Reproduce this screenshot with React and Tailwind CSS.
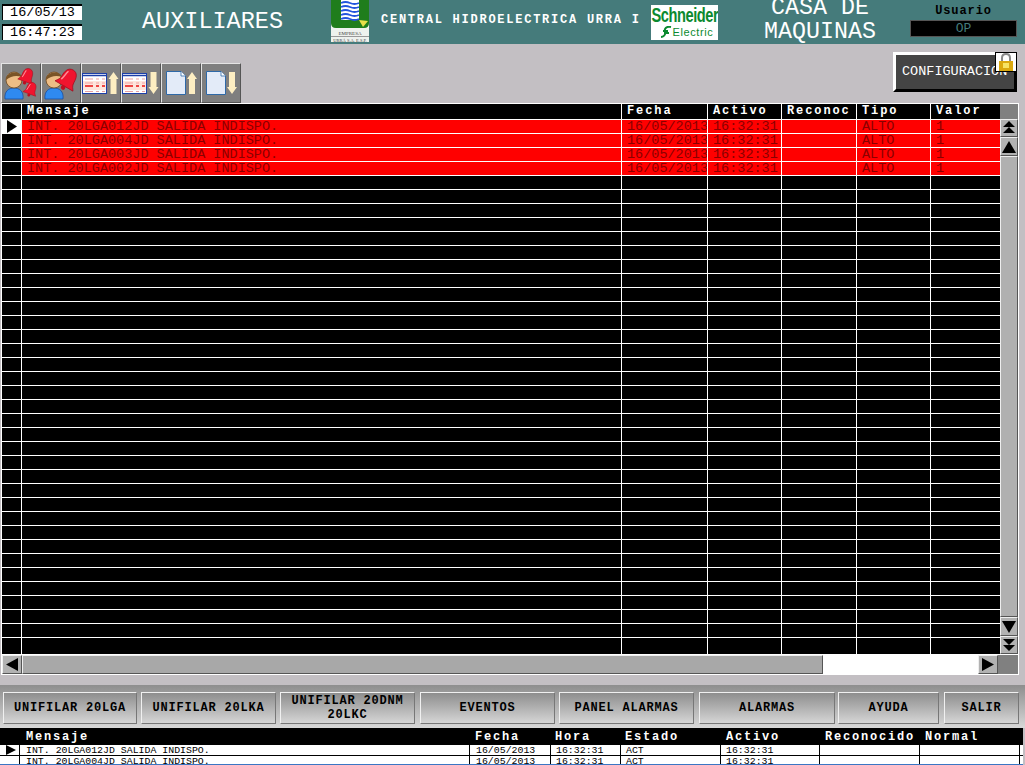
const mono = "font-['Liberation_Mono',monospace]";

const cols = [
  ["Mensaje", "w-[600px]"],
  ["Fecha", "w-[86px]"],
  ["Activo", "w-[74px]"],
  ["Reconoc", "w-[75px]"],
  ["Tipo", "w-[74px]"],
  ["Valor", "w-[69px]"],
];
const alarms = ["012", "004", "003", "002"];
const blank = Array.from({ length: 33 }, (_, i) => i);

function Person({ x = 0 }) {
  return (
    <g transform={`translate(${x} 0)`}>
      <path d="M4 35 C3 27 8 24 13 24 C18 24 23 27 22 35 Z" fill="#2f8af0" stroke="#1a4fa0" strokeWidth="0.8" />
      <circle cx="13" cy="16" r="8" fill="#edbd85" stroke="#6e4a22" strokeWidth="0.8" />
      <path d="M5 16 C5 7 19 6 21 13 C15 11 10 12 5 16 Z" fill="#7a5427" />
    </g>
  );
}
function Bell({ x, y, s = 1, r = 20 }) {
  return (
    <g transform={`translate(${x} ${y}) rotate(${r}) scale(${s})`}>
      <path d="M0 -9 C-5 -9 -6 -4 -6 0 C-6 4 -8 5 -9 7 L9 7 C8 5 6 4 6 0 C6 -4 5 -9 0 -9 Z" fill="#f0142e" stroke="#a00c1c" strokeWidth="0.6" />
      <path d="M-3 -6 C-4 -3 -4 0 -5 3" stroke="#ff8d96" strokeWidth="1.2" fill="none" />
      <circle cx="0" cy="8.500" r="2" fill="#c00d20" />
    </g>
  );
}
function Arrow({ up }) {
  return (
    <path
      d={up
        ? "M31.500 8 L36.500 15 L34.500 15 L34.500 30 L28.500 30 L28.500 15 L26.500 15 Z"
        : "M31.500 30 L36.500 23 L34.500 23 L34.500 8 L28.500 8 L28.500 23 L26.500 23 Z"}
      fill="#fdeec2"
    />
  );
}
function Table({ up }) {
  return (
    <svg width="38" height="38" viewBox="0 0 38 38">
      <rect x="0.500" y="9.500" width="24" height="20" fill="#fff" stroke="#1c3fa8" strokeWidth="1" />
      <path d="M1 11.500 H24" stroke="#1c3fa8" strokeWidth="1.500" />
      <path d="M3 15h8M14 15h3M20 15h3" stroke="#e8a0a0" strokeWidth="1" />
      <rect x="1" y="17" width="23" height="9" fill="#fde5dc" />
      <path d="M3 19h8M14 19h3M20 19h3" stroke="#f3a0a0" strokeWidth="1" />
      <path d="M3 22h8M14 22h3M20 22h3" stroke="#e81010" strokeWidth="1.500" />
      <path d="M3 27.500h8M14 27.500h3M20 27.500h3" stroke="#e8a0a0" strokeWidth="1" />
      <Arrow up={up} />
    </svg>
  );
}
function Page({ up }) {
  return (
    <svg width="38" height="38" viewBox="0 0 38 38">
      <path d="M4.500 7.500 H19 L23.500 12 V30.500 H4.500 Z" fill="#e3ebf8" stroke="#2e69a8" strokeWidth="1" />
      <path d="M19 7.500 V12 H23.500" fill="#fff" stroke="#2e69a8" strokeWidth="0.8" />
      <g transform="translate(-1.500 0)"><Arrow up={up} /></g>
    </svg>
  );
}

function ToolBtn({ children }) {
  return (
    <div className="w-10 h-10 bg-[#7f7f7f] border border-[#e4e4e4] border-b-[#555] border-r-[#555] flex items-center justify-center">
      {children}
    </div>
  );
}

function ScrollBtn({ d, className = "" }) {
  return (
    <div className={`bg-[#b2b2b2] border border-t-[#eee] border-l-[#eee] border-b-[#555] border-r-[#555] flex items-center justify-center ${className}`}>
      <svg width="16" height="14" viewBox="0 0 16 14"><path d={d} fill="#000" /></svg>
    </div>
  );
}

function Btn({ w, children, small }) {
  return (
    <div
      className={`${w} h-[32px] shrink-0 border border-t-[#f0f0f0] border-l-[#f0f0f0] border-b-[#777] border-r-[#777] bg-gradient-to-b from-[#8e8e8e] to-[#d6d6d6] flex items-center justify-center text-center text-[12px] font-bold tracking-[0.8px] text-black ${small ? "leading-[14px]" : ""}`}
    >
      {children}
    </div>
  );
}

export default function App() {
  return (
    <div className={`w-[1025px] h-[765px] overflow-hidden bg-[#c3bfc3] flex flex-col ${mono}`}>
      {/* Header */}
      <header className="h-[44px] shrink-0 bg-[#457b7b] flex items-center relative overflow-hidden">
        <div className="w-[80px] ml-[2px] flex flex-col gap-[4px]">
          <div className="h-[16px] bg-white border-t-2 border-l border-black text-[13.5px] leading-[13px] text-center text-black">16/05/13</div>
          <div className="h-[16px] bg-white border-t-2 border-l border-black text-[13.5px] leading-[13px] text-center text-black">16:47:23</div>
        </div>
        <div className="w-[249px] pl-[12px] text-center text-white text-[23.5px] leading-none">AUXILIARES</div>
        <svg width="38" height="42" viewBox="0 0 38 42" className="shrink-0 self-start">
          <rect width="38" height="42" fill="#eef2ee" />
          <path d="M0 0 H38 V23 Q38 28 33 28 H5 Q0 28 0 23 Z" fill="#1f7d1c" />
          <rect x="10" y="0" width="18" height="20" fill="#fff" />
          <path d="M10 3 q4.500 -2 9 0 t9 0 M10 7 q4.500 -2 9 0 t9 0 M10 11 q4.500 -2 9 0 t9 0 M10 15 q4.500 -2 9 0 t9 0 M10 19 q4.500 -2 9 0 t9 0" stroke="#2255dd" strokeWidth="1.800" fill="none" />
          <path d="M28 20 L37 21 L32 27 Z" fill="#e8e04a" />
          <text x="19" y="34.500" textAnchor="middle" fontFamily="Liberation Serif, serif" fontSize="5" fill="#444">EMPRESA</text>
          <rect y="36" width="38" height="1" fill="#999" />
          <text x="19" y="41.500" textAnchor="middle" fontFamily="Liberation Serif, serif" fontSize="4.500" fill="#444">URRÁ S.A. E.S.P.</text>
        </svg>
        <div className="ml-[12px] mb-[4px] w-[270px] text-white text-[12px] font-bold tracking-[1.75px] whitespace-nowrap">CENTRAL HIDROELECTRICA URRA I</div>
        <div className="w-[67px] h-[35px] bg-white shrink-0 flex flex-col items-center overflow-hidden leading-none font-['Liberation_Sans',sans-serif] text-[#0b8a2f]">
          <div className="text-[17px] font-bold leading-[21px] tracking-[-0.5px] [transform:scaleX(0.86)_scaleY(1.15)] whitespace-nowrap">Schneider</div>
          <div className="flex items-center gap-[1px] ml-[4px]">
            <svg width="12" height="12" viewBox="0 0 12 12"><path d="M11 1 C6 0 4 3 5 6 C6 9 3 11 1 11 M8 5 L3 5 M9 7 L4 7" stroke="#0b8a2f" strokeWidth="2" fill="none" /></svg>
            <div className="text-[11px] leading-[12px] tracking-[0.6px]">Electric</div>
          </div>
        </div>
        <div className="w-[204px] text-center text-white text-[23.3px] leading-[24px] -mt-[4px] shrink-0">
          CASA DE<br />MAQUINAS
        </div>
        <div className="flex flex-col w-[107px] -ml-[12px] self-start">
          <div className="text-center text-[12px] font-bold tracking-[0.9px] text-black leading-[13px] mt-[5px] mb-[2px]">Usuario</div>
          <div className="h-[17px] bg-black border border-[#555] text-center text-[#457b7b] text-[13px] leading-[15px]">OP</div>
        </div>
      </header>

      {/* Toolbar */}
      <div className="h-[59px] shrink-0 flex items-end pl-[1px] relative">
        <ToolBtn>
          <svg width="38" height="38" viewBox="0 0 38 38"><Person x={-1} /><Bell x={25} y={12} s={0.85} /><Bell x={29} y={25} s={0.75} /></svg>
        </ToolBtn>
        <ToolBtn>
          <svg width="38" height="38" viewBox="0 0 38 38"><Person x={-1} /><Bell x={26} y={15} s={1.150} r={30} /></svg>
        </ToolBtn>
        <ToolBtn><Table up /></ToolBtn>
        <ToolBtn><Table /></ToolBtn>
        <ToolBtn><Page up /></ToolBtn>
        <ToolBtn><Page /></ToolBtn>
        <div className="absolute left-[893px] top-[8px] w-[124px] h-[40px] bg-[#444] border-[3px] border-t-white border-l-white border-r-black border-b-black text-white text-[13.5px] leading-[33px] pl-[6px] whitespace-nowrap">
          CONFIGURACION
        </div>
        <div className="absolute left-[995px] top-[8px] w-[22px] h-[20px] bg-white border border-black flex items-center justify-center">
          <svg width="18" height="18" viewBox="0 0 18 18">
            <path d="M5 9 V5 Q5 1 9 1 Q13 1 13 5 V9" fill="none" stroke="#888" strokeWidth="2" />
            <rect x="2" y="8" width="14" height="10" fill="#dba90e" />
            <rect x="6" y="10" width="6" height="5" fill="#f7e463" />
          </svg>
        </div>
      </div>

      {/* Main table */}
      <div className="h-[572px] w-[1018px] ml-[1px] shrink-0 border border-white bg-[#808080] flex flex-col">
        <div className="flex h-[550px] shrink-0">
          <div className="w-[998px] shrink-0 bg-black overflow-hidden flex flex-col">
            <div className="flex h-[16px] shrink-0 bg-black border-b border-white">
              <div className="w-[20px] shrink-0 border-r border-white" />
              {cols.map(([t, w]) => (
                <div key={t} className={`${w} shrink-0 border-r border-white last:border-r-0 text-white text-[12px] font-bold tracking-[1.9px] leading-[15px] pl-[5px] whitespace-nowrap`}>{t}</div>
              ))}
            </div>
            {alarms.map((n, i) => (
              <div key={n} className="flex h-[14px] shrink-0 border-b border-white">
                <div className={`w-[20px] shrink-0 border-r border-white flex items-center justify-center ${i === 0 ? "bg-white" : "bg-black"}`}>
                  {i === 0 && <svg width="10" height="13" viewBox="0 0 10 13" className="ml-[1px]"><path d="M0 0 L10 6.500 L0 13 Z" fill="#000" /></svg>}
                </div>
                <div className="flex bg-[#ff0000] text-[#8a0000] text-[13.5px] leading-[13px]">
                  <div className="w-[600px] shrink-0 border-r border-white pl-[5px] whitespace-pre">{`INT. 20LGA${n}JD SALIDA INDISPO.`}</div>
                  <div className="w-[86px] shrink-0 border-r border-white pl-[5px] whitespace-nowrap overflow-hidden">16/05/2013</div>
                  <div className="w-[74px] shrink-0 border-r border-white pl-[5px] whitespace-nowrap overflow-hidden">16:32:31</div>
                  <div className="w-[75px] shrink-0 border-r border-white" />
                  <div className="w-[74px] shrink-0 border-r border-white pl-[5px]">ALTO</div>
                  <div className="w-[69px] shrink-0 pl-[5px]">1</div>
                </div>
              </div>
            ))}
            {blank.map((i) => (
              <div key={i} className="flex h-[14px] shrink-0 border-b border-white">
                <div className="w-[20px] shrink-0 border-r border-white" />
                <div className="w-[600px] shrink-0 border-r border-white" />
                <div className="w-[86px] shrink-0 border-r border-white" />
                <div className="w-[74px] shrink-0 border-r border-white" />
                <div className="w-[75px] shrink-0 border-r border-white" />
                <div className="w-[74px] shrink-0 border-r border-white" />
              </div>
            ))}
            <div className="flex flex-1">
              <div className="w-[20px] shrink-0 border-r border-white" />
              <div className="w-[600px] shrink-0 border-r border-white" />
              <div className="w-[86px] shrink-0 border-r border-white" />
              <div className="w-[74px] shrink-0 border-r border-white" />
              <div className="w-[75px] shrink-0 border-r border-white" />
              <div className="w-[74px] shrink-0 border-r border-white" />
            </div>
          </div>
          <div className="w-[18px] shrink-0 flex flex-col bg-[#808080]">
            <div className="h-[15px] shrink-0" />
            <ScrollBtn className="h-[18px] shrink-0" d="M8 0 L14 6 L2 6 Z M8 6 L14 12 L2 12 Z" />
            <ScrollBtn className="h-[19px] shrink-0" d="M8 1 L15 13 L1 13 Z" />
            <div className="flex-1 bg-[#b0b0b0] border border-t-[#eee] border-l-[#eee] border-b-[#555] border-r-[#555]" />
            <ScrollBtn className="h-[19px] shrink-0" d="M1 1 L15 1 L8 13 Z" />
            <ScrollBtn className="h-[18px] shrink-0" d="M2 1 L14 1 L8 7 Z M2 7 L14 7 L8 13 Z" />
          </div>
        </div>
        <div className="flex h-[20px] shrink-0 border-t border-white">
          <ScrollBtn className="w-[20px] shrink-0" d="M14 0 L14 13 L2 6.500 Z" />
          <div className="w-[801px] shrink-0 bg-[#a8a8a8] border border-t-[#eee] border-l-[#eee] border-b-[#555] border-r-[#555]" />
          <div className="w-[155px] shrink-0 bg-white" />
          <ScrollBtn className="w-[20px] shrink-0" d="M2 0 L2 13 L14 6.500 Z" />
        </div>
      </div>

      {/* Button bar */}
      <div className="h-[43px] mt-[10px] shrink-0 bg-gradient-to-b from-[#8e8e8e] to-[#d8d8d8] flex items-center pl-[3px] pt-[3px]">
        <Btn w="w-[134px]">UNIFILAR 20LGA</Btn>
        <div className="w-[4px] shrink-0" />
        <Btn w="w-[135px]">UNIFILAR 20LKA</Btn>
        <div className="w-[4px] shrink-0" />
        <Btn w="w-[135px]" small>UNIFILAR 20DNM<br />20LKC</Btn>
        <div className="w-[5px] shrink-0" />
        <Btn w="w-[135px]">EVENTOS</Btn>
        <div className="w-[4px] shrink-0" />
        <Btn w="w-[135px]">PANEL ALARMAS</Btn>
        <div className="w-[5px] shrink-0" />
        <Btn w="w-[136px]">ALARMAS</Btn>
        <div className="w-[3px] shrink-0" />
        <Btn w="w-[101px]">AYUDA</Btn>
        <div className="w-[5px] shrink-0" />
        <Btn w="w-[75px]">SALIR</Btn>
      </div>

      {/* Bottom table */}
      <div className="flex-1 w-[1023px] bg-white border-b border-[#3a76c4] overflow-hidden">
        <div className="h-[17px] bg-black text-white text-[12px] font-bold tracking-[1.8px] leading-[19px] flex">
          <div className="w-[26px] shrink-0" />
          <div className="w-[449px] shrink-0">Mensaje</div>
          <div className="w-[80px] shrink-0">Fecha</div>
          <div className="w-[70px] shrink-0">Hora</div>
          <div className="w-[101px] shrink-0">Estado</div>
          <div className="w-[99px] shrink-0">Activo</div>
          <div className="w-[100px] shrink-0">Reconocido</div>
          <div>Normal</div>
        </div>
        {["012", "004"].map((n, i) => (
          <div key={n} className="flex h-[11px] border-b border-black text-[9.9px] leading-[11px] text-black">
            <div className="w-[20px] shrink-0 border-r border-black flex justify-center items-start">
              {i === 0 && <svg width="10" height="10" viewBox="0 0 10 10" className="ml-[2px]"><path d="M0 0 L10 5 L0 10 Z" fill="#000" /></svg>}
            </div>
            <div className="w-[450px] shrink-0 border-r border-black pl-[6px] whitespace-pre">{`INT. 20LGA${n}JD SALIDA INDISPO.`}</div>
            <div className="w-[81px] shrink-0 border-r border-black pl-[6px]">16/05/2013</div>
            <div className="w-[70px] shrink-0 border-r border-black pl-[5px]">16:32:31</div>
            <div className="w-[100px] shrink-0 border-r border-black pl-[5px]">ACT</div>
            <div className="w-[99px] shrink-0 border-r border-black pl-[5px]">16:32:31</div>
            <div className="w-[100px] shrink-0 border-r border-black" />
            <div className="w-[100px] shrink-0 border-r border-black" />
          </div>
        ))}
      </div>
    </div>
  );
}
